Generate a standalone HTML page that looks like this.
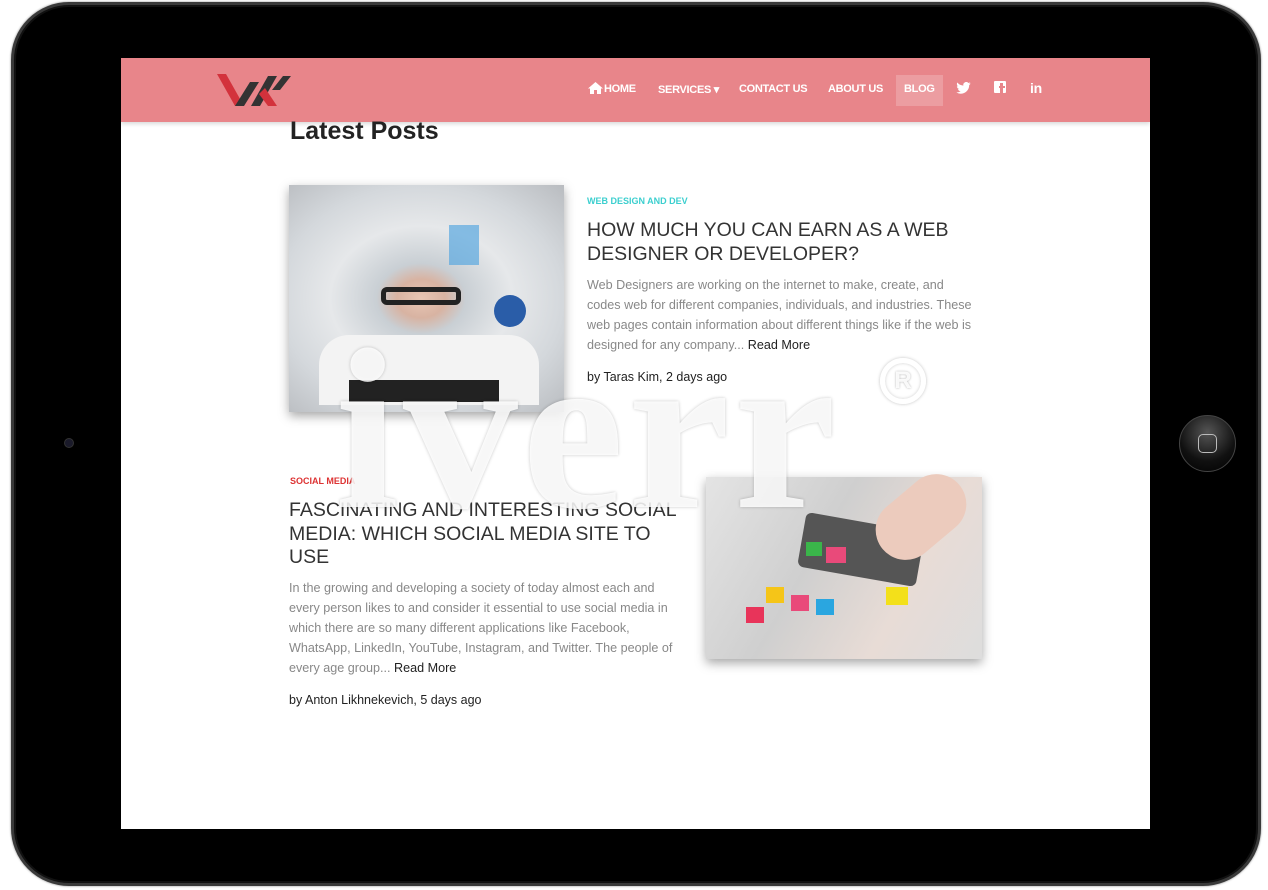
<!DOCTYPE html>
<html><head><meta charset="utf-8"><style>
*{margin:0;padding:0;box-sizing:border-box}
body{width:1268px;height:890px;background:#fff;position:relative;overflow:hidden;font-family:"Liberation Sans",Arial,sans-serif}
.ipad{position:absolute;left:11px;top:2px;width:1250px;height:884px;border-radius:58px;background:#000;border:3px solid #3a3a3a;box-shadow:inset 0 0 0 2px #111, 0 0 2px #888}
.screen{position:absolute;left:121px;top:58px;width:1029px;height:771px;background:#fff;overflow:hidden}
.nav{position:absolute;left:0;top:0;width:1029px;height:64px;background:#e8858a;box-shadow:0 2px 4px rgba(0,0,0,.15)}
.menu{position:absolute;top:18px;left:0;font-size:11px;font-weight:bold;color:#fff;letter-spacing:-.3px}
.menu span{position:absolute;top:7px;white-space:nowrap}
.blog{position:absolute;left:775px;top:17px;width:47px;height:31px;background:rgba(255,255,255,.2)}
h1{position:absolute;left:169px;top:59px;font-size:25px;font-weight:bold;color:#222}
.img{position:absolute;box-shadow:0 4px 10px rgba(0,0,0,.35)}
.cat{position:absolute;font-size:9px;font-weight:bold}
.ttl{position:absolute;font-size:19.5px;color:#333;line-height:23.5px}
.txt{position:absolute;font-size:12.6px;color:#888;line-height:20px;white-space:nowrap}
.txt b{font-weight:normal;color:#222}
.by{position:absolute;font-size:12.5px;color:#222}
.wm{position:absolute;left:335px;top:315px;font-family:"Liberation Serif",serif;font-weight:bold;font-size:230px;color:rgba(255,255,255,.85);text-shadow:0 0 3px rgba(0,0,0,.22);letter-spacing:4px;line-height:1}
</style></head><body>
<div class="ipad"></div>
<div style="position:absolute;left:64px;top:438px;width:10px;height:10px;border-radius:50%;background:#1a1a2a;border:1px solid #333"></div>
<div style="position:absolute;left:1179px;top:415px;width:57px;height:57px;border-radius:50%;background:radial-gradient(circle at 50% 30%,#555,#111 60%,#000);border:1px solid #444"></div>
<div style="position:absolute;left:1198px;top:434px;width:19px;height:19px;border-radius:5px;border:1.5px solid #bbb"></div>
<div class="screen">
 <div class="nav">
  <svg style="position:absolute;left:96px;top:14px" width="76" height="36" viewBox="0 0 76 36">
   <polygon points="0,2 9,2 27,34 18,34" fill="#d3323c"/>
   <polygon points="18,34 27,34 42,10 33,10" fill="#333"/>
   <polygon points="34,34 43,34 60,4 51,4" fill="#333"/>
   <polygon points="42,22 48,16 60,34 51,34" fill="#d3323c"/>
   <polygon points="55,18 63,18 74,4 66,4" fill="#333"/>
  </svg>
  <div class="blog"></div>
  <div class="menu">
   <svg style="position:absolute;left:467px;top:6px" width="15" height="12" viewBox="0 0 15 12"><path d="M7.5 0L0 6.5h2V12h4V8h3v4h4V6.5h2z" fill="#fff"/></svg>
   <span style="left:483px">HOME</span>
   <span style="left:537px">SERVICES ▾</span>
   <span style="left:618px">CONTACT US</span>
   <span style="left:707px">ABOUT US</span>
   <span style="left:783px">BLOG</span>
   <svg style="position:absolute;left:835px;top:6px" width="15" height="12" viewBox="0 0 24 20"><path d="M24 2.4a10 10 0 0 1-2.8.8A5 5 0 0 0 23.3.4a10 10 0 0 1-3.1 1.2A4.9 4.9 0 0 0 11.8 6 14 14 0 0 1 1.7.9a4.9 4.9 0 0 0 1.5 6.6A5 5 0 0 1 1 6.9a4.9 4.9 0 0 0 3.9 4.8 5 5 0 0 1-2.2.1 4.9 4.9 0 0 0 4.6 3.4A9.9 9.9 0 0 1 0 17.3 14 14 0 0 0 7.5 19.5c9 0 14-7.5 14-14v-.6A10 10 0 0 0 24 2.4z" fill="#fff"/></svg>
   <div style="position:absolute;left:873px;top:5px;width:12px;height:12px;background:#fff;border-radius:1px"><div style="position:absolute;left:6px;top:2px;width:3px;height:10px;background:#e8858a"></div><div style="position:absolute;left:5px;top:5px;width:6px;height:2px;background:#e8858a"></div></div>
   <span style="left:909px;top:4px;font-size:14px">in</span>
  </div>
 </div>
 <h1>Latest Posts</h1>
 <div class="img" style="left:168px;top:127px;width:275px;height:227px;background:radial-gradient(ellipse at 48% 50%,#e8c6b4 0,#d8b3a2 12%,#c9cfd4 22%,#e6e8ea 45%,#d4d8dc 70%,#b9bcc0 100%)">
  <div style="position:absolute;left:92px;top:102px;width:80px;height:18px;border:5px solid #222;border-radius:6px"></div>
  <div style="position:absolute;left:30px;top:150px;width:220px;height:70px;background:#f3f3f3;border-radius:30px 30px 0 0"></div>
  <div style="position:absolute;left:60px;top:195px;width:150px;height:22px;background:#222"></div>
  <div style="position:absolute;left:205px;top:110px;width:32px;height:32px;border-radius:50%;background:#2a5da8"></div>
  <div style="position:absolute;left:160px;top:40px;width:30px;height:40px;background:#5aa8e0;opacity:.7"></div>
 </div>
 <div class="cat" style="left:466px;top:138px;color:#3ccfcf">WEB DESIGN AND DEV</div>
 <div class="ttl" style="left:466px;top:161px">HOW MUCH YOU CAN EARN AS A WEB<br>DESIGNER OR DEVELOPER?</div>
 <div class="txt" style="left:466px;top:217px">Web Designers are working on the internet to make, create, and<br>codes web for different companies, individuals, and industries. These<br>web pages contain information about different things like if the web is<br>designed for any company... <b>Read More</b></div>
 <div class="by" style="left:466px;top:312px">by Taras Kim, 2 days ago</div>

 <div class="cat" style="left:169px;top:418px;color:#d33">SOCIAL MEDIA</div>
 <div class="ttl" style="left:168px;top:441px">FASCINATING AND INTERESTING SOCIAL<br>MEDIA: WHICH SOCIAL MEDIA SITE TO<br>USE</div>
 <div class="txt" style="left:168px;top:520px">In the growing and developing a society of today almost each and<br>every person likes to and consider it essential to use social media in<br>which there are so many different applications like Facebook,<br>WhatsApp, LinkedIn, YouTube, Instagram, and Twitter. The people of<br>every age group... <b>Read More</b></div>
 <div class="by" style="left:168px;top:635px">by Anton Likhnekevich, 5 days ago</div>
 <div class="img" style="left:585px;top:419px;width:276px;height:182px;background:linear-gradient(120deg,#e4e4e4,#cfcfcf 40%,#e8dcd6 70%,#ddd)">
  <div style="position:absolute;left:95px;top:45px;width:120px;height:55px;background:#555;transform:rotate(10deg);border-radius:6px"></div>
  <div style="position:absolute;left:165px;top:10px;width:100px;height:60px;background:#eccbbd;border-radius:30px;transform:rotate(-40deg)"></div>
  <div style="position:absolute;left:60px;top:110px;width:18px;height:16px;background:#f5c518"></div>
  <div style="position:absolute;left:85px;top:118px;width:18px;height:16px;background:#e94a7a"></div>
  <div style="position:absolute;left:110px;top:122px;width:18px;height:16px;background:#2aa6e0"></div>
  <div style="position:absolute;left:40px;top:130px;width:18px;height:16px;background:#e8345a"></div>
  <div style="position:absolute;left:180px;top:110px;width:22px;height:18px;background:#f3e01a"></div>
  <div style="position:absolute;left:120px;top:70px;width:20px;height:16px;background:#e94a7a"></div>
  <div style="position:absolute;left:100px;top:65px;width:16px;height:14px;background:#3ab54a"></div>
 </div>
</div>
<div class="wm">iverr</div>
<div style="position:absolute;left:880px;top:358px;width:46px;height:46px;border-radius:50%;border:5px solid rgba(255,255,255,.9);box-shadow:0 0 3px rgba(0,0,0,.25),inset 0 0 3px rgba(0,0,0,.2);color:rgba(255,255,255,.9);text-shadow:0 0 2px rgba(0,0,0,.3);font-weight:bold;font-size:24px;text-align:center;line-height:36px">R</div>
</body></html>
